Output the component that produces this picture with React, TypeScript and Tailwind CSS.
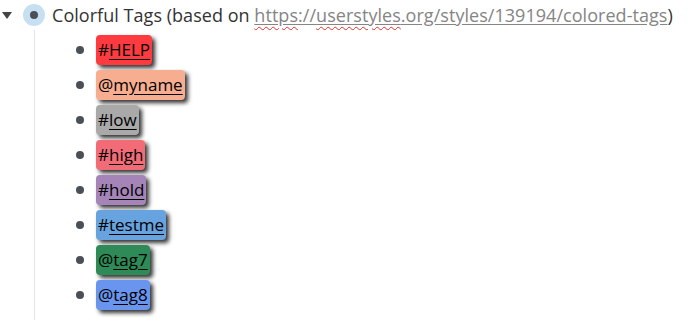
import React from "react";

const tags: { p: string; w: string; bg: string }[] = [
  { p: "#", w: "HELP", bg: "bg-[#ff3b3f]" },
  { p: "@", w: "myname", bg: "bg-[#f7ad8f]" },
  { p: "#", w: "low", bg: "bg-[#a9a9a9]" },
  { p: "#", w: "high", bg: "bg-[#f26c78]" },
  { p: "#", w: "hold", bg: "bg-[#a585b8]" },
  { p: "#", w: "testme", bg: "bg-[#67a3df]" },
  { p: "@", w: "tag7", bg: "bg-[#2e8b57]" },
  { p: "@", w: "tag8", bg: "bg-[#6a95ee]" },
];

export default function App() {
  return (
    <div
      className="w-[690px] h-[321px] bg-white text-[#333] overflow-hidden"
      style={{ fontFamily: '"Open Sans", "Noto Sans", sans-serif' }}
    >
      <div className="flex items-center h-[30px] pl-[2px]">
        <svg width="10" height="8" viewBox="0 0 10 8" className="mt-[1px]">
          <polygon points="0,0 10,0 5,7" fill="#444" />
        </svg>
        <div className="ml-[11px] w-[22px] h-[22px] rounded-full bg-[#c6e0f2] flex items-center justify-center">
          <div className="w-[8px] h-[8px] rounded-full bg-[#4b4f56]" />
        </div>
        <div className="ml-[7px] text-[18px] tracking-[0.04px] text-[#333] whitespace-nowrap">
          Colorful Tags (based on{" "}
          <span className="text-[#858585] underline decoration-[#858585] underline-offset-[2px]">
            <span className="underline decoration-wavy decoration-[#e03030] underline-offset-[4px] [text-decoration-thickness:1px]">https</span>://<span className="underline decoration-wavy decoration-[#e03030] underline-offset-[4px] [text-decoration-thickness:1px]">userstyles</span>.org/styles/139194/colored-tags
          </span>
          )
        </div>
      </div>
      <div className="ml-[34px] border-l border-[#e6e6e6] pl-[40px] pt-[2px] pb-[8px] w-fit">
        {tags.map((t) => (
          <div key={t.w} className="flex items-center h-[35px]">
            <div className="w-[8px] h-[8px] rounded-full bg-[#4b4f56] ml-[1px]" />
            <span
              className={`ml-[12px] ${t.bg} rounded-[4px] px-[2px] h-[30px] flex items-center text-[17px] text-black shadow-[3px_3px_4px_rgba(0,0,0,0.8)]`}
            >
              {t.p}
              <span className="underline underline-offset-[3px]">{t.w}</span>
            </span>
          </div>
        ))}
      </div>
    </div>
  );
}
